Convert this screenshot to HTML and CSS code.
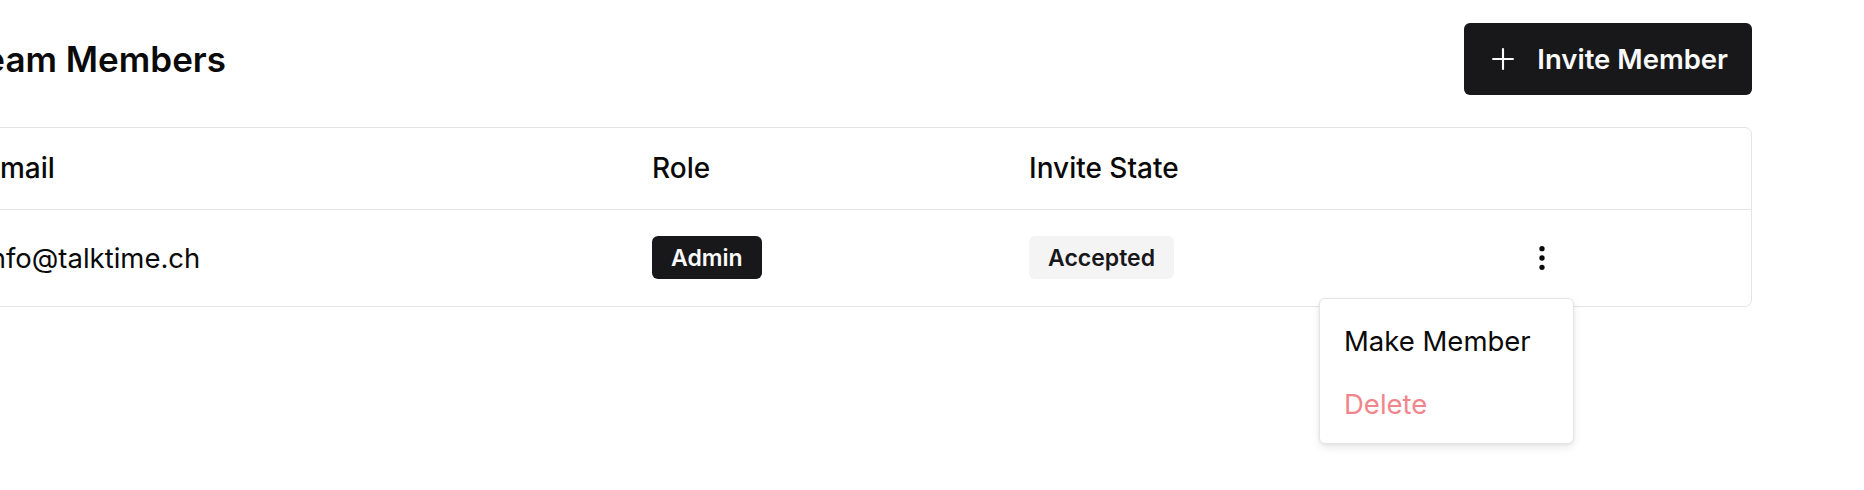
FILE: index.html
```html
<!DOCTYPE html>
<html lang="en">
<head>
<meta charset="utf-8">
<title>Team Members</title>
<link rel="stylesheet" href="styles.css">
</head>
<body>
<div class="page">
  <header class="page-head">
    <h1 class="title">Team Members</h1>
    <button class="btn-primary" type="button">
      <svg class="btn-icon" viewBox="0 0 24 24" fill="none" stroke="currentColor" stroke-width="1.5" stroke-linecap="round" stroke-linejoin="round"><path d="M5 12h14"/><path d="M12 5v14"/></svg>
      <span>Invite Member</span>
    </button>
  </header>

  <div class="table-wrap">
    <table class="members">
      <colgroup>
        <col class="col-email">
        <col class="col-role">
        <col class="col-state">
        <col class="col-actions">
      </colgroup>
      <thead>
        <tr>
          <th>Email</th>
          <th>Role</th>
          <th>Invite State</th>
          <th></th>
        </tr>
      </thead>
      <tbody>
        <tr>
          <td>info@talktime.ch</td>
          <td><span class="badge badge-dark">Admin</span></td>
          <td><span class="badge badge-light">Accepted</span></td>
          <td>
            <div class="menu-anchor">
              <button class="kebab" type="button" aria-label="Open menu">
                <svg viewBox="0 0 24 24" fill="none" stroke="currentColor" stroke-width="2" stroke-linecap="round" stroke-linejoin="round"><circle cx="12" cy="12" r="1"/><circle cx="12" cy="5" r="1"/><circle cx="12" cy="19" r="1"/></svg>
              </button>
              <div class="menu" role="menu">
                <div class="menu-item" role="menuitem">Make Member</div>
                <div class="menu-item menu-item-danger" role="menuitem">Delete</div>
              </div>
            </div>
          </td>
        </tr>
      </tbody>
    </table>
  </div>
</div>
</body>
</html>
```

FILE: styles.css
```css
* { box-sizing: border-box; }

html, body {
  margin: 0;
  min-height: 100vh;
  background: #ffffff;
  color: #0a0a0a;
  font-family: Inter, "Noto Sans", "Liberation Sans", sans-serif;
}

.page {
  position: relative;
  min-height: 490px;
  margin: 0 112px 0 -45px;
  padding-top: 23px;
}

.page-head {
  display: flex;
  align-items: center;
  justify-content: space-between;
  height: 72px;
  padding-left: 9px;
}

.title {
  margin: 0;
  font-size: 35px;
  font-weight: 600;
  letter-spacing: 0;
}

.btn-primary {
  display: inline-flex;
  align-items: center;
  gap: 17px;
  height: 72px;
  padding: 0 24px 0 22px;
  border: 0;
  border-radius: 6px;
  background: #18181b;
  color: #fafafa;
  font-family: inherit;
  font-size: 27.5px;
  font-weight: 600;
}

.btn-icon {
  width: 34px;
  height: 34px;
}

.table-wrap {
  margin-top: 32px;
  border: 1.5px solid #e4e4e7;
  border-radius: 7px;
}

.members {
  width: 100%;
  border-collapse: collapse;
  table-layout: fixed;
}

.col-email { width: 669px; }
.col-role { width: 377px; }
.col-state { width: 497px; }

.members th,
.members td {
  padding: 0 27px;
  text-align: left;
  vertical-align: middle;
}

.members th {
  height: 81px;
  font-size: 28px;
  font-weight: 500;
  border-bottom: 1.5px solid #e4e4e7;
}

.members td {
  height: 97px;
  font-size: 27.5px;
  font-weight: 400;
}

.badge {
  display: inline-flex;
  align-items: center;
  height: 43px;
  padding: 0 19px;
  border-radius: 6px;
  font-size: 23px;
  font-weight: 600;
}

.badge-dark {
  background: #18181b;
  color: #fafafa;
}

.badge-light {
  background: #f4f4f5;
  color: #18181b;
}

.menu-anchor {
  position: relative;
  display: block;
  width: 32px;
  height: 32px;
}

.kebab {
  display: block;
  width: 32px;
  height: 32px;
  padding: 0;
  border: 0;
  background: transparent;
  color: #0a0a0a;
}

.kebab svg {
  display: block;
  width: 32px;
  height: 32px;
}

.menu {
  position: absolute;
  top: 56px;
  right: -16px;
  z-index: 10;
  width: 255px;
  padding: 11px 0 7px;
  background: #ffffff;
  border: 1px solid #e4e4e7;
  border-radius: 6px;
  box-shadow: 0 4px 8px rgba(0, 0, 0, 0.08), 0 1px 3px rgba(0, 0, 0, 0.06);
}

.menu-item {
  height: 63px;
  line-height: 63px;
  padding-left: 24px;
  font-size: 27.5px;
  color: #0a0a0a;
  white-space: nowrap;
}

.menu-item-danger {
  color: #f0868b;
}
```
